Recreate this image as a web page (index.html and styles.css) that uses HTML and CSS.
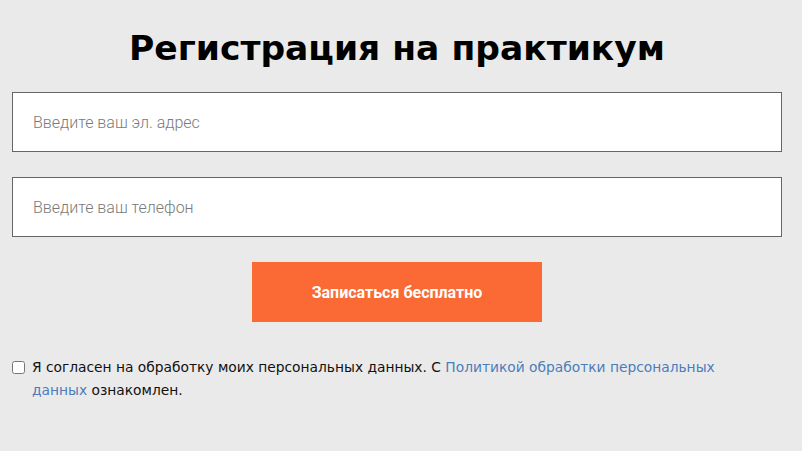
FILE: index.html
```html
<!DOCTYPE html>
<html lang="ru">
<head>
<meta charset="utf-8">
<title>Регистрация на практикум</title>
<link rel="stylesheet" href="styles.css">
</head>
<body>
<main class="page">
  <h1 class="title">Регистрация на практикум</h1>
  <form class="form">
    <input class="field" type="email" placeholder="Введите ваш эл. адрес">
    <input class="field" type="tel" placeholder="Введите ваш телефон">
    <button class="submit" type="button">Записаться бесплатно</button>
    <label class="agree">
      <input class="agree-box" type="checkbox">
      <span class="agree-text">Я согласен на обработку моих персональных данных. С <a class="agree-link" href="#">Политикой обработки персональных данных</a> ознакомлен.</span>
    </label>
  </form>
</main>
</body>
</html>
```

FILE: styles.css
```css
html, body {
  margin: 0;
  padding: 0;
  background: #eaeaea;
}
.page {
  width: 770px;
  padding: 26px 0 0 12px;
  box-sizing: content-box;
}
.title {
  margin: 0 0 22px;
  text-align: center;
  font-family: "DejaVu Sans", sans-serif;
  font-weight: 700;
  font-size: 34.5px;
  line-height: 44px;
  color: #000;
}
.form {
  display: flex;
  flex-direction: column;
  align-items: center;
}
.field {
  box-sizing: border-box;
  width: 100%;
  height: 60px;
  margin: 0 0 25px;
  padding: 0 20px;
  border: 1px solid #666;
  border-radius: 0;
  background: #fff;
  font-family: Roboto, sans-serif;
  font-weight: 300;
  font-size: 16px;
  color: #333;
  outline: none;
}
.field::placeholder {
  color: #7a7a7a;
}
.submit {
  width: 290px;
  height: 60px;
  margin: 0 0 34px;
  border: 0;
  background: #fb6a35;
  color: #fff;
  font-family: Roboto, sans-serif;
  font-weight: 700;
  font-size: 16px;
}
.agree {
  align-self: stretch;
  display: flex;
  align-items: flex-start;
  gap: 7px;
  font-family: "DejaVu Sans", sans-serif;
  font-size: 13.8px;
  line-height: 23px;
  color: #111;
}
.agree-box {
  margin: 5px 0 0;
  width: 13px;
  height: 13px;
  flex: none;
}
.agree-text {
  max-width: 700px;
}
.agree-link {
  color: #4a7dba;
  text-decoration: none;
}
```
